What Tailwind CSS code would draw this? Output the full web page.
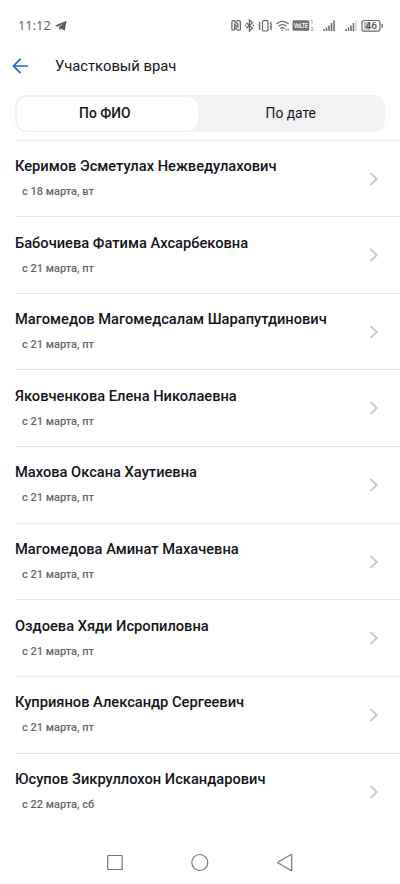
<!DOCTYPE html>
<html lang="ru">
<head>
<meta charset="utf-8">
<meta name="viewport" content="width=device-width, initial-scale=1">
<title>Участковый врач</title>
<script src="https://cdn.jsdelivr.net/npm/@tailwindcss/browser@4"></script>
</head>
<body class="bg-white">
<div class="flex h-[884px] w-[400px] flex-col overflow-hidden bg-white font-['Roboto',sans-serif] text-[#13151d]">
  <header class="flex h-[46px] shrink-0 items-center pt-[6px] pl-[18px] pr-[17px] text-[#686868]">
    <span class="w-[33px] -mt-[2px] whitespace-nowrap font-['Noto_Sans',sans-serif] text-[12.8px] leading-4">11:12</span>
    <svg class="ml-[4px]" width="12" height="12" viewBox="0 0 12 12" fill="#5c5c5c"><path d="M0 5.500 11.500.7 9.800 10.700 6 8.500 4.500 10.300 3.800 7.300 8.400 3.200 2.800 6.800Z"/></svg>
    <div class="ml-auto flex items-center">
      <svg width="152" height="16" viewBox="231 18 152 16" fill="none" stroke="#686868">
        <path d="M234.300 30.200h-1.200q-1.200 0-1.200-1.200v-7q0-1.300 1.200-1.300h1.300l3.500 3.500v3.300M234.600 30.200v-6l3.300 3.300M236.300 20.700h2.900q1.200 0 1.200 1.200v7q0 1.300-1.200 1.300h-1.500l-2.700-2.700" stroke-width="1.300"/>
        <path d="m246.300 22.800 6.100 5.400-3 2.800v-11l3 2.800-6.100 5.400" stroke-width="1.200"/>
        <path d="M245 25.500h1.300m6.200 0h1.500" stroke-width="1.500"/>
        <rect x="262.500" y="20.600" width="5.500" height="10.400" rx="1" stroke-width="1.200"/>
        <path d="m259 22 1 1.300-1 1.300 1 1.300-1 1.300 1 1.300-1 1.300m12.500-7.800-1 1.300 1 1.300-1 1.300 1 1.300-1 1.300 1 1.300" stroke-width="1.200"/>
        <path d="M276.500 23.800q6-5 12 0M278.500 26.200q4-3.300 8 0M280.400 28.500q2.100-1.700 4.200 0" stroke-width="1.300"/>
        <circle cx="282.400" cy="30.300" r=".8" fill="#686868" stroke="none"/>
        <path d="M286.200 28.500v2.500m2-2.500v2.500" stroke-width=".8"/>
        <rect x="292.500" y="20.300" width="16.700" height="10.400" rx="1.500" fill="#707070" stroke="none"/>
        <text x="293.900" y="28.400" textLength="14" lengthAdjust="spacingAndGlyphs" fill="#fff" stroke="none" font-family="Roboto" font-weight="700" font-size="7.600">VoLTE</text>
        <g fill="#686868" stroke="none" font-family="Roboto" font-size="5"><text x="310.600" y="24.300">1</text><text x="310.600" y="31">2</text></g>
        <path d="M324 29v2M326.500 27.500v3.500M329 25.500v5.500M331.500 23v8M334 20.500v10.500" stroke-width="1.500"/>
        <path d="M346 29v2M348.500 27.500v3.500M351 25.500v5.500" stroke-width="1.500"/>
        <path d="M353.500 23v8" stroke-width="1.500"/><path d="M356 20.500v10.500" stroke="#ccc" stroke-width="1.300"/>
        <rect x="362" y="20.500" width="18" height="10.700" rx="2.500" stroke-width="1.200"/>
        <path d="M364 22h6v7.700h-6z" fill="#bbb" stroke="none"/>
        <path d="M382.200 23.800v4" stroke-width="1.400"/>
        <text x="365.400" y="29.300" textLength="11.500" lengthAdjust="spacingAndGlyphs" fill="#555" stroke="none" font-family="Roboto" font-weight="500" font-size="9.800">46</text>
      </svg>
    </div>
  </header>
  <div class="flex h-[49px] shrink-0 items-start pl-[12px] pt-[10px]">
    <svg class="mt-[2px]" width="17" height="16" viewBox="0 0 17 16" fill="none" stroke="#1b66d2" stroke-width="1.700" stroke-linecap="round" stroke-linejoin="round"><path d="M15.200 8H1.500M8 1.400 1.400 8 8 14.600"/></svg>
    <h1 class="ml-[26px] w-[130px] whitespace-nowrap text-[14.8px] leading-[20px]">Участковый врач</h1>
  </div>
  <div class="ml-[15px] flex h-[37px] w-[370px] shrink-0 rounded-[11px] bg-[#f2f2f2] p-[1.5px]">
    <div class="flex w-[181.5px] items-center justify-center rounded-[10px] bg-white pr-[5px] text-[13.8px] font-medium">По ФИО</div>
    <div class="flex flex-1 items-center justify-center text-[13.8px]">По дате</div>
  </div>
  <main id="list" class="ml-[15px] mt-[7.5px] h-[691px] shrink-0"></main>
  <nav class="mt-[19px] flex h-[24px] shrink-0 items-center pl-[107px]">
    <svg width="186" height="18" viewBox="107 853 186 18" fill="none" stroke="#777" stroke-width="1.200" stroke-linejoin="round"><rect x="107.700" y="855.500" width="14.500" height="14" rx=".6"/><circle cx="199.800" cy="862.500" r="8"/><path d="M291.700 854.800v15.400q0 .5-.6.200l-13-7.300q-.7-.5 0-1l13-7.500q.6-.3.600.2z"/></svg>
  </nav>
</div>
<script>
const rows = [
  ['Керимов Эсметулах Нежведулахович', 'с 18 марта, вт'],
  ['Бабочиева Фатима Ахсарбековна', 'с 21 марта, пт'],
  ['Магомедов Магомедсалам Шарапутдинович', 'с 21 марта, пт'],
  ['Яковченкова Елена Николаевна', 'с 21 марта, пт'],
  ['Махова Оксана Хаутиевна', 'с 21 марта, пт'],
  ['Магомедова Аминат Махачевна', 'с 21 марта, пт'],
  ['Оздоева Хяди Исропиловна', 'с 21 марта, пт'],
  ['Куприянов Александр Сергеевич', 'с 21 марта, пт'],
  ['Юсупов Зикруллохон Искандарович', 'с 22 марта, сб']
];
document.getElementById('list').innerHTML = rows.map(([name, date]) => `
  <div class="flex h-[76.65px] items-start justify-between border-t border-[#e6e6e6] pr-[21px]">
    <div class="whitespace-nowrap pt-[15.4px]">
      <div class="text-[14.66px] font-medium leading-[20px]">${name}</div>
      <div class="mt-[8px] pl-[7px] text-[11px] font-medium leading-[16px] text-[#65676b]">${date}</div>
    </div>
    <svg class="mt-[31px]" width="10" height="14" viewBox="0 0 10 14" fill="none" stroke="#c8c8c8" stroke-width="1.800"><path d="m1.500 1 6.300 6-6.300 6"/></svg>
  </div>`).join('');
</script>
</body>
</html>
